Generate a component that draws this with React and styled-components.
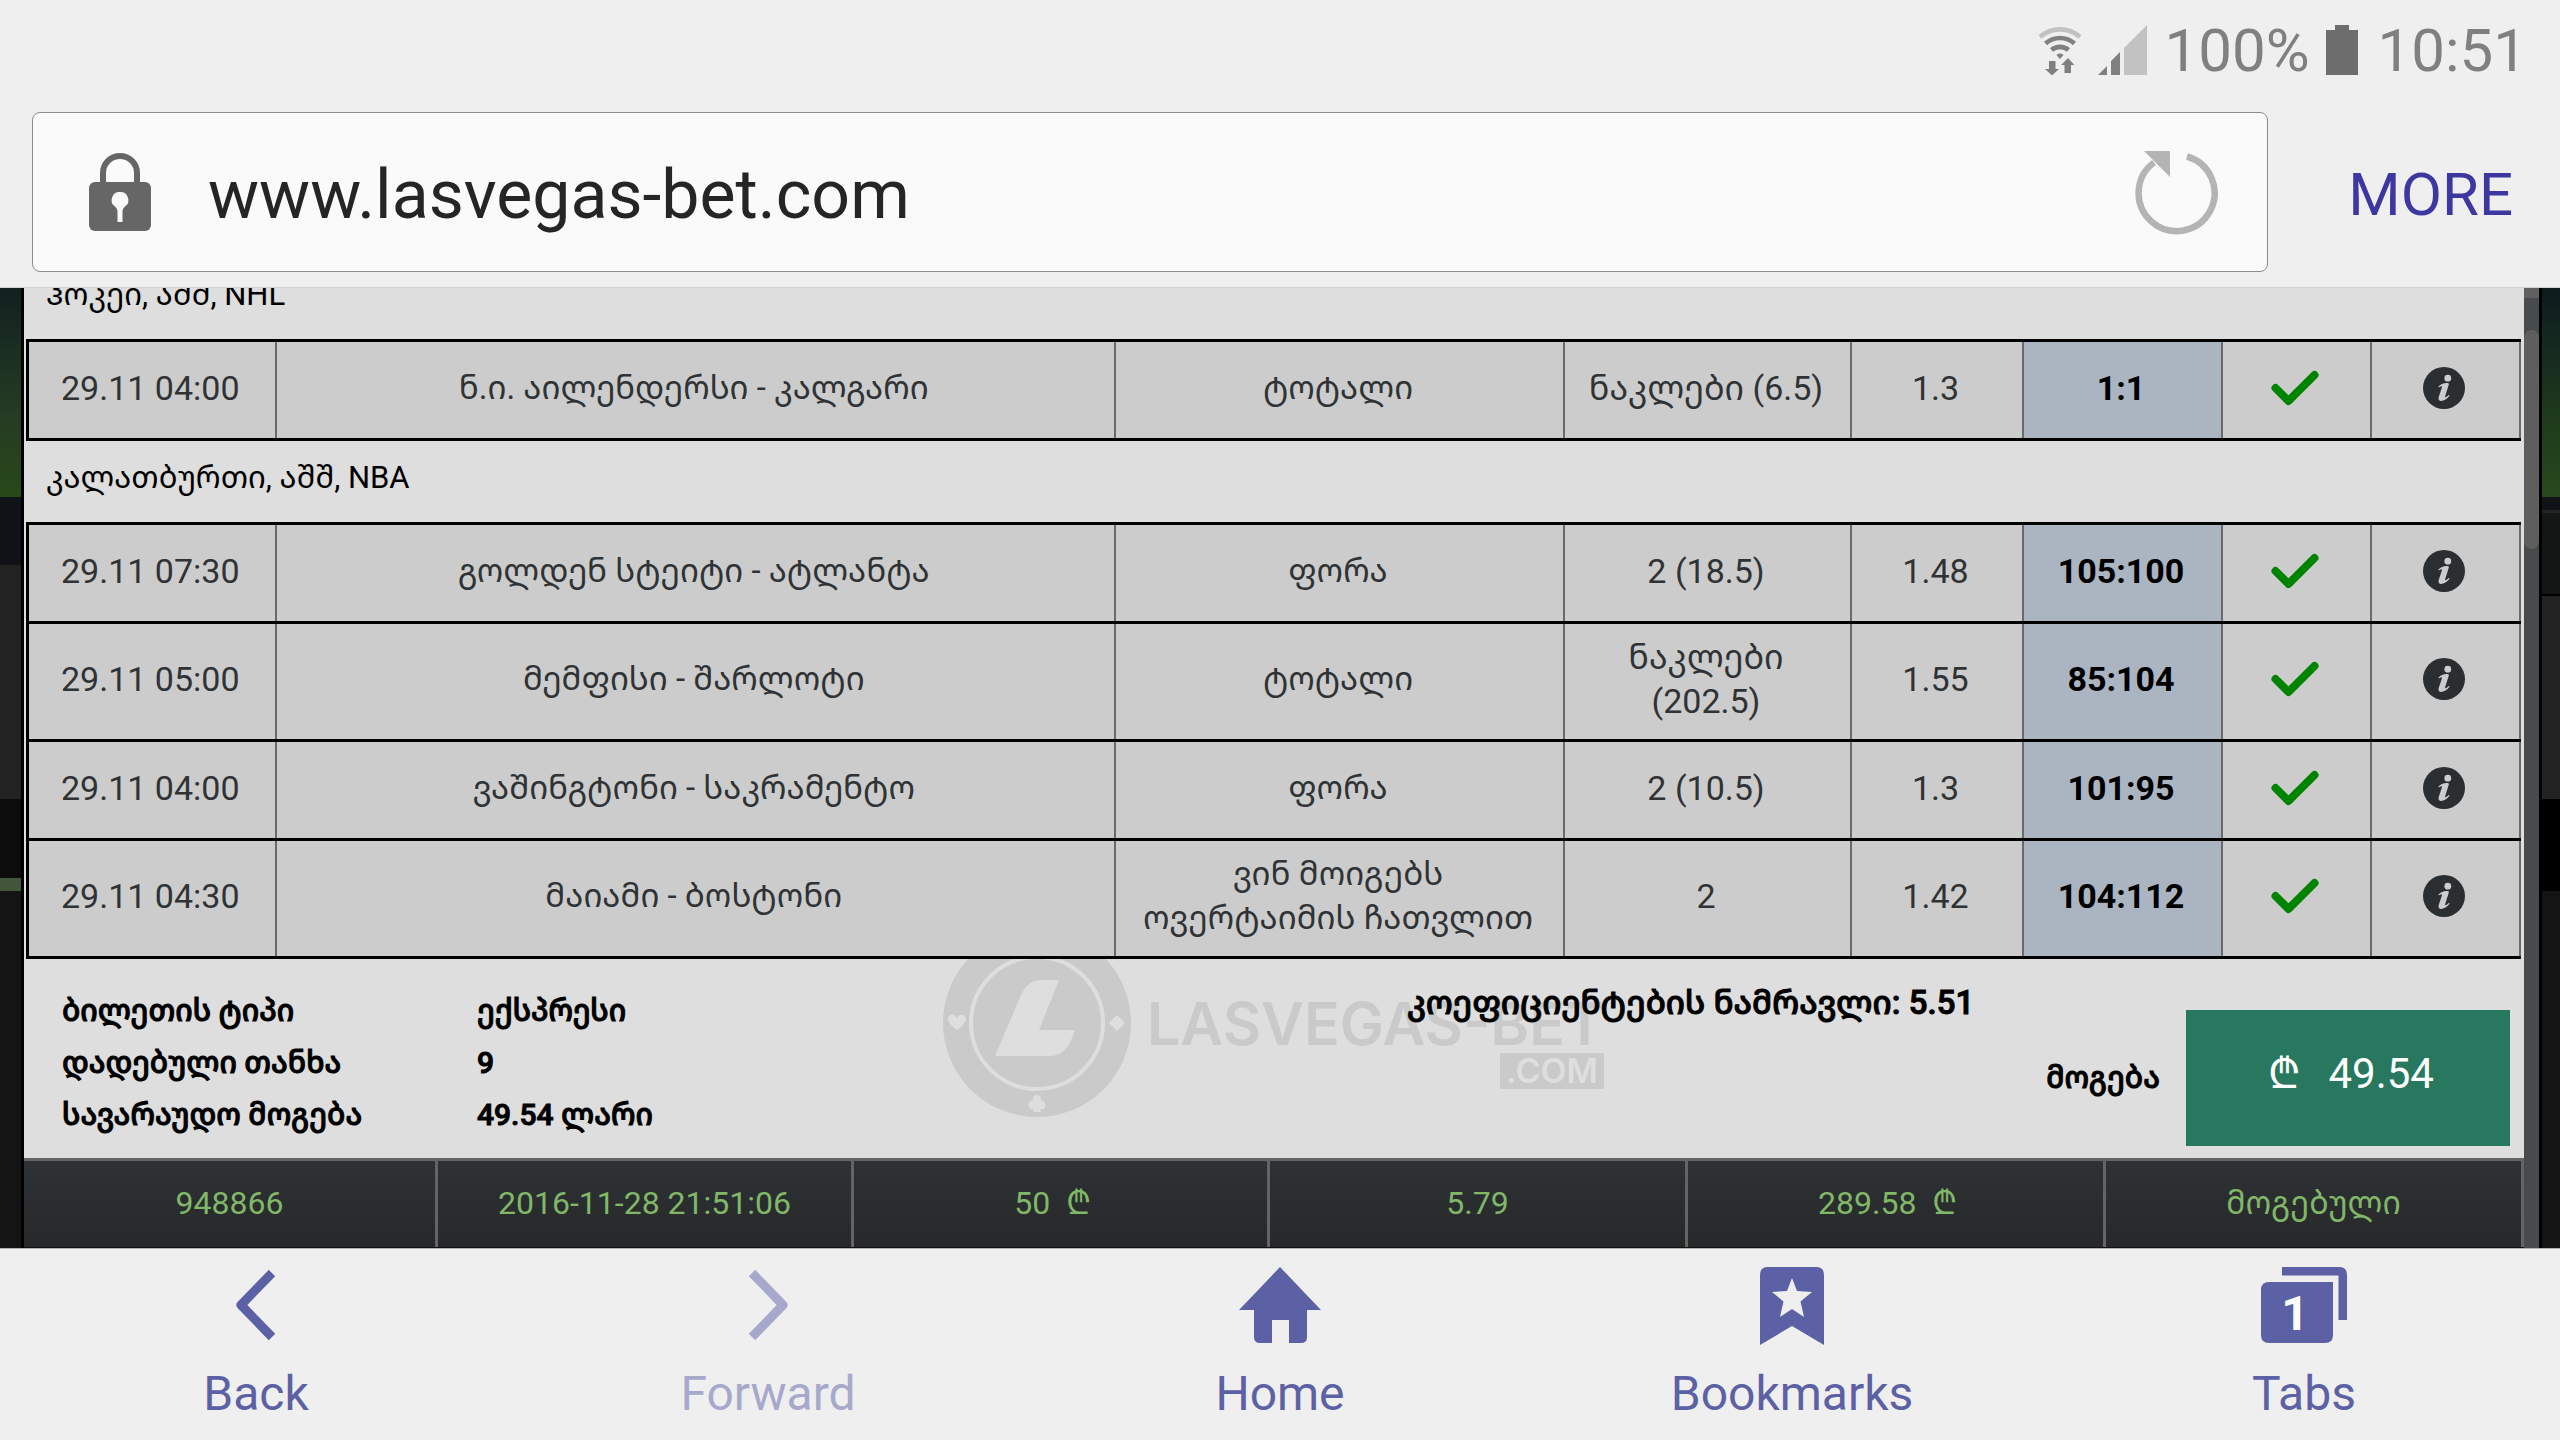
import React from 'react';
import styled, { createGlobalStyle, css } from 'styled-components';

const GlobalStyle = createGlobalStyle`
  * {
    box-sizing: border-box;
  }
  body {
    margin: 0;
    background: #efefef;
    font-family: Roboto, 'Noto Sans Georgian', 'DejaVu Sans', sans-serif;
  }
  button, input {
    font: inherit;
    color: inherit;
    border: 0;
    padding: 0;
    background: none;
  }
  svg {
    display: block;
  }
`;

const Screen = styled.div`
  display: flex;
  flex-direction: column;
  min-height: 100vh;
`;

/* ---- browser header ---- */

const BrowserHeader = styled.header`
  padding-bottom: 15px;
  border-bottom: 1px solid #d2d2d2;
`;

const StatusBar = styled.div`
  display: flex;
  align-items: center;
  justify-content: flex-end;
  gap: 16px;
  height: 112px;
  padding: 0 33px 12px 0;
  font-size: 60px;
  line-height: 72px;
  color: #808080;
`;

const StatusText = styled.span`
  padding-top: 2px;
  padding-left: ${(p) => (p.$gap ? '4px' : '0')};
`;

const AddressRow = styled.div`
  display: flex;
  align-items: center;
  gap: 80px;
  padding: 0 47px 0 32px;
`;

const AddressBox = styled.div`
  flex: 1;
  display: flex;
  align-items: center;
  height: 160px;
  padding: 0 48px 0 56px;
  background: #fafafa;
  border: 1px solid #8c8c8c;
  border-radius: 8px;
`;

const AddressInput = styled.input`
  flex: 1;
  min-width: 0;
  margin: 0 24px 0 57px;
  padding-top: 5px;
  font-size: 68px;
  line-height: 80px;
  color: #252525;
  outline: none;
`;

const MoreButton = styled.button`
  padding-top: 5px;
  font-size: 60px;
  line-height: 72px;
  color: #3d37a2;
`;

/* ---- page under the modal ---- */

const PageView = styled.main`
  flex: 1;
  display: grid;
  grid-template-columns: 24px 1fr 15px 21px;
  overflow: hidden;
  background: #000;
`;

const LeftStrip = styled.div`
  border-right: 3px solid #000;
  background: linear-gradient(
    #12201f 0, #1c3022 70px, #263c23 130px, #284819 209px,
    #111217 209px, #111217 277px, #222 277px, #222 511px,
    #0c0c0c 511px, #0c0c0c 590px, #42563c 590px, #42563c 603px,
    #141414 603px
  );
`;

const RightStrip = styled.div`
  border-left: 3px solid #000;
  background: linear-gradient(
    #0c1b1d 0, #182c1f 70px, #1e3a1b 130px, #29491f 209px,
    #111217 209px, #111217 222px, #242424 222px, #242424 225px,
    #141515 225px, #141515 306px, #000 306px, #000 308px,
    #222 308px, #222 511px, #000 511px, #000 603px, #141414 603px
  );
`;

const ScrollTrack = styled.div`
  padding-top: 42px;
  background: linear-gradient(#606060 10px, #474b4d 10px);
`;

const ScrollThumb = styled.div`
  height: 219px;
  border-radius: 8px;
  background: #5e5e5e;
`;

const Ticket = styled.section`
  display: flex;
  flex-direction: column;
  min-width: 0;
  background: #dedede;
`;

/* the page is scrolled, so the first title is cut by the header */
const Scrolled = styled.div`
  margin-top: -30px;
`;

const League = styled.h2`
  margin: 0;
  padding: 15px 22px 22px;
  font-size: 31px;
  font-weight: 400;
  line-height: 44px;
  color: #000;
`;

const Matches = styled.table`
  width: calc(100% - 5px);
  margin: 0 3px 0 2px;
  border-collapse: collapse;
  table-layout: fixed;
  border-left: 3px solid #000;
  background: #cccccc;
`;

const Col = styled.col`
  width: ${(p) => p.$w};
`;

const MatchRow = styled.tr`
  border-top: 3px solid #000;
  border-bottom: 3px solid #000;
`;

const Cell = styled.td`
  height: 99px;
  padding: 11px 14px 16px 11px;
  border-right: 2px solid #6a6a6a;
  text-align: center;
  font-size: ${(p) => (p.$name ? '33px' : '34px')};
  line-height: 44px;
  color: #2f3335;
  svg {
    margin: 0 auto;
  }
  ${(p) =>
    p.$score &&
    css`
      background: #abb5c2;
      color: #000;
      font-weight: 700;
    `}
`;

const InfoButton = styled.button`
  display: block;
  margin: 0 auto;
`;

/* ---- totals ---- */

const Summary = styled.div`
  position: relative;
  flex: 1;
  display: flex;
  overflow: hidden;
  padding: 26px 14px 12px 38px;
  font-size: 30px;
  font-weight: 500;
  line-height: 52px;
  color: #000;
`;

const Watermark = styled.div`
  position: absolute;
  top: -30px;
  left: 919px;
  display: flex;
  gap: 16px;
  color: #cacaca;
`;

const WatermarkName = styled.div`
  display: flex;
  flex-direction: column;
  align-items: flex-end;
  padding-top: 66px;
  font-family: Inter, sans-serif;
  font-size: 59px;
  font-weight: 600;
  line-height: 58px;
`;

const WatermarkCom = styled.span`
  padding: 0 6px;
  border-radius: 2px;
  background: #cacaca;
  color: #dedede;
  font-size: 34px;
  line-height: 36px;
`;

const Details = styled.dl`
  position: relative;
  display: grid;
  grid-template-columns: 415px auto;
  align-content: start;
  margin: 0;
  -webkit-text-stroke: 1px;
`;

const Term = styled.dt``;

const Value = styled.dd`
  margin: 0;
`;

const Product = styled.p`
  position: relative;
  margin: -8px 72px 0 auto;
  font-size: 33px;
  -webkit-text-stroke: 1px;
`;

const Payout = styled.div`
  position: relative;
  display: flex;
  align-items: center;
  align-self: flex-end;
  gap: 26px;
`;

const PayoutLabel = styled.label`
  -webkit-text-stroke: 1px;
`;

const PayoutBox = styled.output`
  display: flex;
  align-items: center;
  justify-content: center;
  gap: 28px;
  width: 324px;
  height: 136px;
  padding: 0 0 8px 6px;
  background: #27785e;
  color: #fff;
  font-size: 42px;
  font-weight: 400;
  line-height: 48px;
`;

const TicketBar = styled.ul`
  display: grid;
  grid-template-columns: 414px 416px 416px repeat(3, 1fr);
  margin: 0;
  padding: 0;
  list-style: none;
  border-top: 3px solid #646464;
  border-bottom: 1px solid #111;
  background: linear-gradient(#2e3235, #272829);
`;

const TicketBarItem = styled.li`
  padding: 20px 0 22px;
  border-right: 3px solid #646464;
  text-align: center;
  white-space: pre;
  font-size: 32px;
  line-height: 44px;
  color: #80b868;
`;

/* ---- browser footer ---- */

const BottomBar = styled.nav`
  display: grid;
  grid-template-columns: repeat(5, 1fr);
  border-top: 1px solid #b4b4b4;
`;

const NavButton = styled.button`
  display: flex;
  flex-direction: column;
  align-items: center;
  gap: 18px;
  padding: 18px 0 15px;
  font-size: 48px;
  line-height: 62px;
  color: ${(p) => (p.disabled ? '#a7a9cc' : '#5c61a5')};
`;

const WifiIcon = () => (
  <svg width="44" height="50" viewBox="0 0 44 50" fill="none" stroke="#808080" strokeWidth="4.6">
    <path d="M2 12a30 30 0 0 1 40 0" stroke="#c2c2c2" />
    <path d="M7.500 18.500a22 22 0 0 1 29 0" />
    <path d="M13.500 25a13 13 0 0 1 17 0" />
    <path d="M18.500 30a5 5 0 0 1 7 0l-3.500 4z" fill="#808080" stroke="none" />
    <path d="M11 36h6.500v8H21l-7 6.500-7-6.500h4zM26.500 48v-8H23l7-7 6.500 7H33v8z" fill="#808080" stroke="none" />
  </svg>
);

const SignalIcon = () => (
  <svg width="50" height="50" viewBox="0 0 50 50">
    <path d="M0 50l9-9v9zM13 50V36l9-9v23z" fill="#808080" />
    <path d="M26 50V23L49 0v50z" fill="#c2c2c2" />
  </svg>
);

const BatteryIcon = () => (
  <svg width="32" height="50" viewBox="0 0 32 50" fill="#6d6d6d">
    <path d="M9 0h14v5h9v45H0V5h9z" />
  </svg>
);

const LockIcon = () => (
  <svg width="62" height="78" viewBox="0 0 62 78">
    <path d="M14 32V20a17 17 0 0 1 34 0v12" fill="none" stroke="#666" strokeWidth="6" />
    <rect y="29" width="62" height="49" rx="6" fill="#666" />
    <path d="M31 39a8 8 0 0 0-5 14.500c1.500 1.500 2.500 3 2.500 5V69h5V58.500c0-2 1-3.500 2.500-5A8 8 0 0 0 31 39z" fill="#fafafa" />
  </svg>
);

const ReloadIcon = () => (
  <svg width="84" height="90" viewBox="0 0 84 90">
    <path d="M52 9.500a38 38 0 1 1-33 6" fill="none" stroke="#b4b4b4" strokeWidth="6.500" />
    <path d="M9 4h26v26z" fill="#b4b4b4" />
  </svg>
);

const CheckIcon = () => (
  <svg width="48" height="36" viewBox="0 0 48 36" fill="none" stroke="#008400" strokeWidth="8" strokeLinecap="round" strokeLinejoin="round">
    <path d="M4.500 18L17.500 31L43.500 5" />
  </svg>
);

const InfoIcon = () => (
  <svg width="42" height="42" viewBox="0 0 42 42">
    <circle cx="21" cy="21" r="21" fill="#2a2e31" />
    <g fill="#cccccc">
      <circle cx="24.800" cy="11.200" r="3.400" />
      <path d="M15.500 19.500c2.500-2.600 6.500-4 9.800-3.200.8.300.5 1.200.3 2l-3.400 10.800c-.3 1.300.2 1.400 1.100.8l2.500-1.900c.6-.2.900.4.5 1-2 2.900-5.800 5.200-8.700 5-2-.3-2.400-2-1.900-3.900l3.100-9.400c.3-1.200-.3-1.600-1.300-1.200l-1.500.7c-.6 0-.8-.4-.5-.7z" />
    </g>
  </svg>
);

const ChipIcon = () => (
  <svg width="188" height="188" viewBox="0 0 188 188">
    <circle cx="94" cy="94" r="94" fill="#cacaca" />
    <circle cx="94" cy="94" r="66" fill="none" stroke="#dedede" strokeWidth="4" />
    <g fill="#dedede">
      <path d="M52 127L78 66q7-15 20-15h18L96 101h36q-8 26-24 26z" />
      <path d="M14 101c-5-4-9-7-9-11 0-5 7-6 9-1 2-5 9-4 9 1 0 4-4 7-9 11z" />
      <path d="M174 86l8 8-8 8-8-8z" />
      <circle cx="94" cy="170" r="4" />
      <circle cx="90" cy="176" r="4.500" />
      <circle cx="98" cy="176" r="4.500" />
      <path d="M94 172l4 11h-8z" />
    </g>
  </svg>
);

const BackIcon = () => (
  <svg width="40" height="78" viewBox="0 0 40 78" fill="none" stroke="currentColor" strokeWidth="9" strokeLinejoin="round">
    <path d="M36 6L5 38L36 70" />
  </svg>
);

const ForwardIcon = () => (
  <svg width="40" height="78" viewBox="0 0 40 78" fill="none" stroke="currentColor" strokeWidth="9" strokeLinejoin="round">
    <path d="M4 6L35 38L4 70" />
  </svg>
);

const HomeIcon = () => (
  <svg width="82" height="78" viewBox="0 0 82 78" fill="currentColor">
    <path d="M41 0L82 43H68V70q0 6-6 6H50V53H33V76H21q-6 0-6-6V43H0z" />
  </svg>
);

const BookmarkIcon = () => (
  <svg width="64" height="78" viewBox="0 0 64 78">
    <path d="M8 0H56q8 0 8 8V78L32 59L0 78V8q0-8 8-8z" fill="currentColor" />
    <path d="M32 11l5 13 15 1-11.500 9.500L44 50l-12-8-12 8 3.500-15.500L12 25l15-1z" fill="#efefef" />
  </svg>
);

const TabsIcon = () => (
  <svg width="86" height="78" viewBox="0 0 86 78" fill="currentColor">
    <path d="M21 0H78q8 0 8 8V53H77.500V8.500H21z" />
    <path d="M8 15H72V68q0 8-8 8H8q-8 0-8-8V23q0-8 8-8z" />
    <text x="34" y="63" textAnchor="middle" fontFamily="Roboto" fontWeight="700" fontSize="48" fill="#fff">1</text>
  </svg>
);

const leagues = [
  {
    name: 'ჰოკეი, აშშ, NHL',
    games: [['29.11 04:00', 'ნ.ი. აილენდერსი - კალგარი', 'ტოტალი', 'ნაკლები (6.5)', '1.3', '1:1']],
  },
  {
    name: 'კალათბურთი, აშშ, NBA',
    games: [
      ['29.11 07:30', 'გოლდენ სტეიტი - ატლანტა', 'ფორა', '2 (18.5)', '1.48', '105:100'],
      ['29.11 05:00', 'მემფისი - შარლოტი', 'ტოტალი', 'ნაკლები (202.5)', '1.55', '85:104'],
      ['29.11 04:00', 'ვაშინგტონი - საკრამენტო', 'ფორა', '2 (10.5)', '1.3', '101:95'],
      ['29.11 04:30', 'მაიამი - ბოსტონი', 'ვინ მოიგებს ოვერტაიმის ჩათვლით', '2', '1.42', '104:112'],
    ],
  },
];

const widths = ['248px', 'auto', '449px', '287px', '172px', '199px', '149px', '149px'];

const details = [
  ['ბილეთის ტიპი', 'ექსპრესი'],
  ['დადებული თანხა', '9'],
  ['სავარაუდო მოგება', '49.54 ლარი'],
];

const ticketBar = ['948866', '2016-11-28 21:51:06', '50  ₾  ', '5.79', '289.58  ₾  ', 'მოგებული'];

const navItems = [
  { label: 'Back', icon: <BackIcon /> },
  { label: 'Forward', icon: <ForwardIcon />, disabled: true },
  { label: 'Home', icon: <HomeIcon /> },
  { label: 'Bookmarks', icon: <BookmarkIcon /> },
  { label: 'Tabs', icon: <TabsIcon /> },
];

const App = () => {
  return (
    <Screen>
      <GlobalStyle />
      <BrowserHeader>
        <StatusBar>
          <WifiIcon />
          <SignalIcon />
          <StatusText>100%</StatusText>
          <BatteryIcon />
          <StatusText $gap>10:51</StatusText>
        </StatusBar>
        <AddressRow>
          <AddressBox>
            <LockIcon />
            <AddressInput type="text" aria-label="Address" defaultValue="www.lasvegas-bet.com" />
            <button type="button" aria-label="Reload">
              <ReloadIcon />
            </button>
          </AddressBox>
          <MoreButton type="button">MORE</MoreButton>
        </AddressRow>
      </BrowserHeader>

      <PageView>
        <LeftStrip />
        <Ticket>
          <Scrolled>
            {leagues.map((league) => (
              <React.Fragment key={league.name}>
                <League>{league.name}</League>
                <Matches aria-label={league.name}>
                  <colgroup>
                    {widths.map((w, i) => (
                      <Col key={i} $w={w} />
                    ))}
                  </colgroup>
                  <tbody>
                    {league.games.map((game) => (
                      <MatchRow key={game[1]}>
                        {game.map((text, i) => (
                          <Cell key={i} $name={i === 1 || i === 2} $score={i === 5}>{text}</Cell>
                        ))}
                        <Cell><CheckIcon /></Cell>
                        <Cell>
                          <InfoButton type="button" aria-label="Info">
                            <InfoIcon />
                          </InfoButton>
                        </Cell>
                      </MatchRow>
                    ))}
                  </tbody>
                </Matches>
              </React.Fragment>
            ))}
          </Scrolled>
          <Summary>
            <Watermark>
              <ChipIcon />
              <WatermarkName>
                LASVEGAS-BET
                <WatermarkCom>.COM</WatermarkCom>
              </WatermarkName>
            </Watermark>
            <Details>
              {details.map(([term, value]) => (
                <React.Fragment key={term}>
                  <Term>{term}</Term>
                  <Value>{value}</Value>
                </React.Fragment>
              ))}
            </Details>
            <Product>კოეფიციენტების ნამრავლი: 5.51</Product>
            <Payout>
              <PayoutLabel htmlFor="payout">მოგება</PayoutLabel>
              <PayoutBox id="payout">
                <span>₾</span>
                <span>49.54</span>
              </PayoutBox>
            </Payout>
          </Summary>
          <TicketBar>
            {ticketBar.map((text) => (
              <TicketBarItem key={text}>{text}</TicketBarItem>
            ))}
          </TicketBar>
        </Ticket>
        <ScrollTrack>
          <ScrollThumb />
        </ScrollTrack>
        <RightStrip />
      </PageView>

      <BottomBar>
        {navItems.map((item) => (
          <NavButton key={item.label} type="button" disabled={item.disabled}>
            {item.icon}
            {item.label}
          </NavButton>
        ))}
      </BottomBar>
    </Screen>
  );
};

export default App;
